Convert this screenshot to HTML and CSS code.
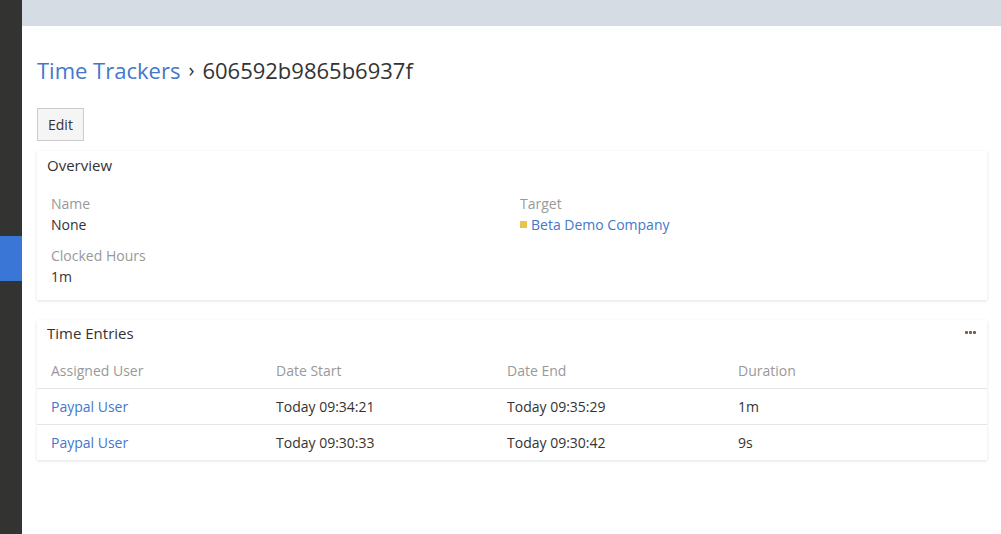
FILE: index.html
```html
<!DOCTYPE html>
<html>
<head>
<meta charset="utf-8">
<link rel="stylesheet" href="styles.css">
</head>
<body>
<div class="app">
  <aside class="sidebar">
    <div class="side-active"></div>
  </aside>
  <div class="main">
    <div class="topbar"></div>
    <div class="content">
      <h1 class="title"><a class="crumb">Time Trackers</a><span class="sep">›</span><span>606592b9865b6937f</span></h1>
      <div class="actions"><button class="btn">Edit</button></div>
      <section class="panel overview">
        <div class="panel-head"><span>Overview</span></div>
        <div class="panel-body">
          <div class="grid">
            <div class="field">
              <div class="label">Name</div>
              <div class="value">None</div>
            </div>
            <div class="field">
              <div class="label">Target</div>
              <div class="value"><span class="sq"></span><a class="link">Beta Demo Company</a></div>
            </div>
            <div class="field">
              <div class="label">Clocked Hours</div>
              <div class="value">1m</div>
            </div>
          </div>
        </div>
      </section>
      <section class="panel entries">
        <div class="panel-head"><span>Time Entries</span><span class="dots"><i></i><i></i><i></i></span></div>
        <table class="table">
          <thead>
            <tr><th class="c1">Assigned User</th><th class="c2">Date Start</th><th class="c3">Date End</th><th>Duration</th></tr>
          </thead>
          <tbody>
            <tr><td><a class="link">Paypal User</a></td><td>Today 09:34:21</td><td>Today 09:35:29</td><td>1m</td></tr>
            <tr><td><a class="link">Paypal User</a></td><td>Today 09:30:33</td><td>Today 09:30:42</td><td>9s</td></tr>
          </tbody>
        </table>
      </section>
    </div>
  </div>
</div>
</body>
</html>
```

FILE: styles.css
```css
* { box-sizing: border-box; }
html, body { margin: 0; padding: 0; }
body {
  font-family: "Open Sans", "Liberation Sans", sans-serif;
  font-size: 14px;
  color: #333;
  background: #fff;
  width: 1001px;
  height: 534px;
  overflow: hidden;
}
.app { display: flex; height: 534px; }
.sidebar {
  width: 22px;
  flex: none;
  background: #333331;
  padding-top: 236px;
}
.side-active { height: 45px; background: #3a76d6; }
.main { flex: 1; display: flex; flex-direction: column; }
.topbar { height: 26px; background: #d5dce4; flex: none; }
.content { padding: 0 14px 0 15px; }
.title {
  margin: 29px 0 0;
  font-weight: 400;
  font-size: 22px;
  line-height: 30px;
  color: #333;
  display: flex;
  align-items: center;
}
.crumb { color: #4477cc; }
.sep { margin: 0 8px 0 8px; font-size: 20px; }
.actions { margin-top: 23px; }
.btn {
  font-family: inherit;
  font-size: 14px;
  color: #333;
  background: #f5f5f5;
  border: 1px solid #ccc;
  height: 33px;
  padding: 0 10px;
  line-height: 31px;
}
.panel {
  background: #fff;
  box-shadow: 0 1px 3px rgba(0,0,0,0.12);
  margin-top: 10px;
}
.entries { margin-top: 20px; }
.panel-head {
  height: 30px;
  padding: 0 10px 3px;
  font-size: 15px;
  display: flex;
  align-items: center;
  justify-content: space-between;
}
.entries .panel-head { height: 26px; padding-bottom: 1px; }
.panel-body { padding: 12px 14px 13px; }
.grid {
  display: grid;
  grid-template-columns: 469px 1fr;
  row-gap: 10px;
}
.label { color: #999; line-height: 21px; }
.value { line-height: 21px; display: flex; align-items: center; }
.link { color: #4477cc; }
.sq { width: 7px; height: 7px; background: #ecc24e; margin-right: 4px; display: inline-block; }
.dots { display: flex; gap: 1px; margin-right: 1px; }
.dots i { width: 3px; height: 3px; background: #7a5a48; border-radius: 1px; display: block; }
.table { width: 100%; border-collapse: collapse; margin-top: 8px; }
.table th, .table td { text-align: left; padding: 0 14px; }
.table th { font-weight: 400; color: #999; height: 34px; vertical-align: middle; }
.table td { border-top: 1px solid #e5e5e5; height: 36px; }
.c1 { width: 225px; }
.c2 { width: 231px; }
.c3 { width: 231px; }
```
